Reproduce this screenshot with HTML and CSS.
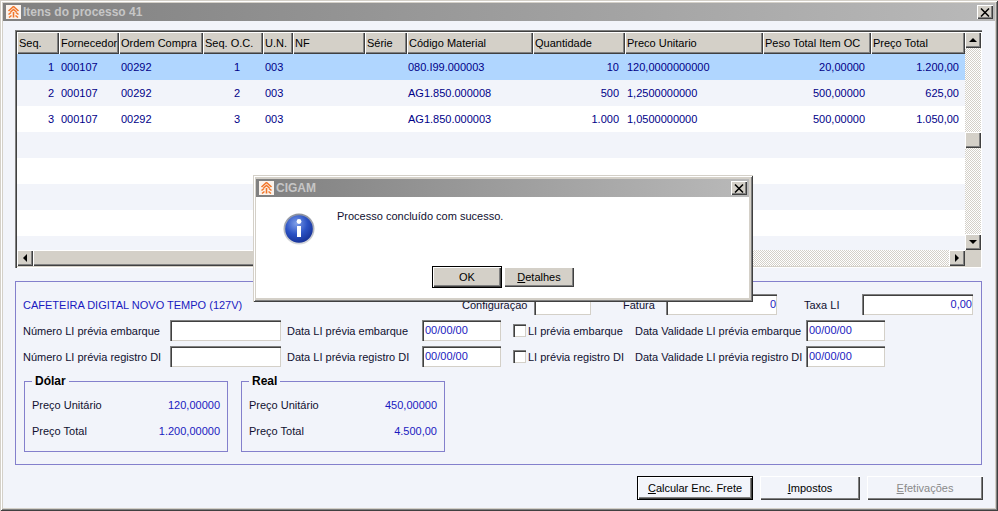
FILE: index.html
```html
<!DOCTYPE html>
<html lang="pt">
<head>
<meta charset="utf-8">
<title>Itens do processo 41</title>
<link rel="stylesheet" href="styles.css">
</head>
<body>
<div class="window main-window">
  <div class="titlebar">
    <svg class="app-icon" viewBox="0 0 15 14"><rect width="15" height="14" fill="#fbf3ec"/><path d="M7.500 1.500 2.500 6M7.500 1.500 12.500 6M4.500 7 7.500 4.500 10.500 7M2.500 9.500 5 7.500M12.500 9.500 10 7.500M3 12.500 5.500 10.500M12 12.500 9.500 10.500M7.500 7v5.500" stroke="#f2762a" stroke-width="1.600" fill="none"/></svg>
    <span class="title-text">Itens do processo 41</span>
    <button class="close-btn" type="button"><svg viewBox="0 0 10 9"><path d="M1 0.5 9 8.500M9 0.5 1 8.500" stroke="#000" stroke-width="1.500"/></svg></button>
  </div>
  <div class="client">
    <div class="grid">
      <div class="grid-top">
        <div class="grid-view">
          <table class="data-table">
            <colgroup>
              <col class="c42"><col class="c60"><col class="c84"><col class="c60"><col class="c30"><col class="c72"><col class="c42"><col class="c126"><col class="c92"><col class="c138"><col class="c108"><col class="c94">
            </colgroup>
            <thead>
              <tr><th>Seq.</th><th>Fornecedor</th><th>Ordem Compra</th><th>Seq. O.C.</th><th>U.N.</th><th>NF</th><th>Série</th><th>Código Material</th><th>Quantidade</th><th>Preco Unitario</th><th>Peso Total Item OC</th><th>Preço Total</th></tr>
            </thead>
            <tbody>
              <tr class="selected"><td class="num-seq">1</td><td>000107</td><td>00292</td><td class="num-oc">1</td><td>003</td><td></td><td></td><td class="code">080.I99.000003</td><td class="num">10</td><td>120,0000000000</td><td class="num">20,00000</td><td class="num">1.200,00</td></tr>
              <tr class="alt"><td class="num-seq">2</td><td>000107</td><td>00292</td><td class="num-oc">2</td><td>003</td><td></td><td></td><td class="code">AG1.850.000008</td><td class="num">500</td><td>1,2500000000</td><td class="num">500,00000</td><td class="num">625,00</td></tr>
              <tr><td class="num-seq">3</td><td>000107</td><td>00292</td><td class="num-oc">3</td><td>003</td><td></td><td></td><td class="code">AG1.850.000003</td><td class="num">1.000</td><td>1,0500000000</td><td class="num">500,00000</td><td class="num">1.050,00</td></tr>
              <tr class="alt"><td colspan="12"></td></tr>
              <tr><td colspan="12"></td></tr>
              <tr class="alt"><td colspan="12"></td></tr>
              <tr><td colspan="12"></td></tr>
              <tr class="alt"><td colspan="12"></td></tr>
            </tbody>
          </table>
        </div>
        <div class="vscroll">
          <div class="sb-btn"><i class="arrow up"></i></div>
          <div class="track v-track-a"></div>
          <div class="sb-thumb v-thumb"></div>
          <div class="track v-track-b"></div>
          <div class="sb-btn"><i class="arrow down"></i></div>
        </div>
      </div>
      <div class="hscroll">
        <div class="sb-btn"><i class="arrow left"></i></div>
        <div class="sb-thumb h-thumb"></div>
        <div class="track h-track"></div>
        <div class="sb-btn"><i class="arrow right"></i></div>
        <div class="corner"></div>
      </div>
    </div>

    <div class="panel">
      <div class="form-row">
        <span class="product">CAFETEIRA DIGITAL NOVO TEMPO (127V)</span>
        <label class="l-config">Configuração</label><span class="input w57"></span>
        <label class="l-fatura">Fatura</label><span class="input w111 value">0</span>
        <label class="l-taxa">Taxa LI</label><span class="input w111 value">0,00</span>
      </div>
      <div class="form-row">
        <label class="l-num">Número LI prévia embarque</label><span class="input w111"></span>
        <label class="l-data">Data LI prévia embarque</label><span class="input w79 date">00/00/00</span>
        <span class="check"></span><label class="l-check">LI prévia embarque</label>
        <label class="l-valid">Data Validade LI prévia embarque</label><span class="input w79 date">00/00/00</span>
      </div>
      <div class="form-row">
        <label class="l-num">Número LI prévia registro DI</label><span class="input w111"></span>
        <label class="l-data">Data LI prévia registro DI</label><span class="input w79 date">00/00/00</span>
        <span class="check"></span><label class="l-check">LI prévia registro DI</label>
        <label class="l-valid">Data Validade LI prévia registro DI</label><span class="input w79 date">00/00/00</span>
      </div>
      <div class="groups">
        <div class="group">
          <span class="legend">Dólar</span>
          <div class="group-row"><span>Preço Unitário</span><span class="amount">120,00000</span></div>
          <div class="group-row"><span>Preço Total</span><span class="amount">1.200,00000</span></div>
        </div>
        <div class="group">
          <span class="legend">Real</span>
          <div class="group-row"><span>Preço Unitário</span><span class="amount">450,00000</span></div>
          <div class="group-row"><span>Preço Total</span><span class="amount">4.500,00</span></div>
        </div>
      </div>
    </div>

    <div class="actions">
      <button class="action default" type="button"><u>C</u>alcular Enc. Frete</button>
      <button class="action w100" type="button"><u>I</u>mpostos</button>
      <button class="action disabled" type="button"><u>E</u>fetivações</button>
    </div>
  </div>
</div>

<div class="window dialog">
  <div class="titlebar">
    <svg class="app-icon" viewBox="0 0 15 14"><rect width="15" height="14" fill="#fbf3ec"/><path d="M7.500 1.500 2.500 6M7.500 1.500 12.500 6M4.500 7 7.500 4.500 10.500 7M2.500 9.500 5 7.500M12.500 9.500 10 7.500M3 12.500 5.500 10.500M12 12.500 9.500 10.500M7.500 7v5.500" stroke="#f2762a" stroke-width="1.600" fill="none"/></svg>
    <span class="title-text">CIGAM</span>
    <button class="close-btn" type="button"><svg viewBox="0 0 10 9"><path d="M1 0.5 9 8.500M9 0.5 1 8.500" stroke="#000" stroke-width="1.500"/></svg></button>
  </div>
  <div class="dialog-body">
    <div class="dialog-msg">
      <svg class="info-icon" viewBox="0 0 32 32">
        <defs>
          <radialGradient id="blue" cx="0.4" cy="0.3" r="0.8"><stop offset="0" stop-color="#7f9fe8"/><stop offset="0.5" stop-color="#2b52c4"/><stop offset="1" stop-color="#122a8c"/></radialGradient>
          <linearGradient id="ring" x1="0" y1="0" x2="0" y2="1"><stop offset="0" stop-color="#8a8f9c"/><stop offset="1" stop-color="#d8dade"/></linearGradient>
        </defs>
        <circle cx="16" cy="16" r="15.500" fill="url(#ring)"/>
        <circle cx="16" cy="16" r="13.800" fill="url(#blue)"/>
        <circle cx="16" cy="8.500" r="2.400" fill="#fff"/>
        <rect x="14" y="13" width="4" height="11" fill="#fff"/>
      </svg>
      <p class="msg-text">Processo concluído com sucesso.</p>
    </div>
    <div class="dialog-actions">
      <button class="dlg-btn default" type="button">OK</button>
      <button class="dlg-btn small" type="button"><u>D</u>etalhes</button>
    </div>
  </div>
</div>
</body>
</html>
```
FILE: styles.css
```css
* { box-sizing: border-box; }
html, body { margin: 0; padding: 0; }
body {
  width: 998px;
  height: 511px;
  overflow: hidden;
  position: relative;
  font: 11px "Liberation Sans", sans-serif;
  color: #101030;
  background: #d4d0c8;
}
.window {
  position: absolute;
  display: flex;
  flex-direction: column;
  padding: 3px;
  background: #d4d0c8;
  box-shadow: inset 1px 1px 0 #d4d0c8, inset -1px -1px 0 #404040, inset 2px 2px 0 #fff, inset -2px -2px 0 #808080;
}
.main-window { left: 0; top: 0; width: 998px; height: 511px; }
.dialog { left: 253px; top: 175px; width: 500px; height: 127px; padding: 4px 4px 4px 3px; z-index: 2; }

.titlebar {
  height: 18px;
  flex: none;
  display: flex;
  align-items: center;
  padding: 0 2px 0 3px;
  background: linear-gradient(90deg, #808080, #b9b9b9);
}
.app-icon { width: 15px; height: 14px; flex: none; }
.title-text {
  margin-left: 2px;
  font: bold 12px "Liberation Sans", sans-serif;
  color: #c6c6c6;
  white-space: nowrap;
  flex: 1;
}
.close-btn {
  width: 16px;
  height: 14px;
  padding: 0 2px;
  border: 0;
  display: flex;
  align-items: center;
  justify-content: center;
  background: #d4d0c8;
  box-shadow: inset 1px 1px 0 #fff, inset -1px -1px 0 #404040, inset -2px -2px 0 #808080;
}
.close-btn svg { width: 10px; height: 9px; }

.client {
  flex: 1;
  background: #f2f4fa;
  padding: 9px 13px 0 12px;
  display: flex;
  flex-direction: column;
}

/* data grid */
.grid {
  width: 967px;
  height: 238px;
  flex: none;
  padding: 2px 1px 1px 2px;
  background: #fff;
  box-shadow: inset 1px 1px 0 #808080, inset 2px 2px 0 #404040, inset -1px -1px 0 #fff, inset -2px -2px 0 #d4d0c8;
}
.grid-top { display: flex; height: 218px; }
.grid-view { width: 948px; height: 218px; overflow: hidden; background: #f2f4fa; }
.data-table { width: 948px; table-layout: fixed; border-collapse: collapse; border-spacing: 0; }
.c30 { width: 30px; } .c42 { width: 42px; } .c60 { width: 60px; } .c72 { width: 72px; }
.c84 { width: 84px; } .c92 { width: 92px; } .c94 { width: 94px; } .c108 { width: 108px; }
.c126 { width: 126px; } .c138 { width: 138px; }
th {
  height: 22px;
  padding: 0 0 1px 2px;
  font-weight: normal;
  font-size: 11px;
  text-align: left;
  color: #000;
  white-space: nowrap;
  overflow: hidden;
  background: #d4d0c8;
  box-shadow: inset 1px 1px 0 #fff, inset -1px -1px 0 #404040, inset -2px -2px 0 #808080;
}
td {
  height: 26px;
  padding: 0 0 1px 2px;
  color: #000088;
  background: #fff;
  white-space: nowrap;
}
.alt td { background: #f2f4fa; }
.selected td { background: #b0d6ff; }
td.num { text-align: right; padding-right: 6px; }
td.num-seq { text-align: right; padding-right: 5px; }
td.num-oc { text-align: right; padding-right: 23px; }
td.code { padding-left: 1px; }

/* scrollbars */
.vscroll { width: 16px; display: flex; flex-direction: column; }
.hscroll { display: flex; height: 16px; }
.sb-btn, .sb-thumb {
  flex: none;
  background: #d4d0c8;
  box-shadow: inset 1px 1px 0 #fff, inset -1px -1px 0 #404040, inset -2px -2px 0 #808080;
}
.sb-btn { width: 16px; height: 16px; display: flex; align-items: center; justify-content: center; }
.track { background: repeating-conic-gradient(#d4d0c8 0 25%, #fff 0 50%) 0 0 / 2px 2px; }
.v-track-a { height: 84px; }
.v-thumb { height: 16px; }
.v-track-b { flex: 1; }
.h-thumb { width: 300px; }
.h-track { flex: 1; }
.corner { width: 16px; flex: none; background: #d4d0c8; }
.arrow { width: 0; height: 0; border: 4px solid transparent; display: block; }
.arrow.up { border-top: 0; border-bottom-color: #000; }
.arrow.down { border-bottom: 0; border-top-color: #000; }
.arrow.left { border-left: 0; border-right-color: #000; }
.arrow.right { border-right: 0; border-left-color: #000; }

/* form panel */
.panel {
  width: 967px;
  height: 184px;
  flex: none;
  margin-top: 13px;
  padding: 12px 7px 0;
  border: 1px solid #8480cc;
  display: flex;
  flex-direction: column;
  gap: 5px;
}
.form-row { display: flex; align-items: center; height: 21px; white-space: nowrap; }
.form-row label { display: block; flex: none; }
.product { width: 439px; color: #1a1ac0; flex: none; }
.l-config { width: 72px; }
.l-fatura { width: 43px; margin-left: 32px; }
.l-taxa { width: 58px; margin-left: 27px; }
.l-num { width: 147px; }
.l-data { width: 135px; margin-left: 6px; }
.l-check { width: 107px; margin-left: 2px; }
.l-valid { width: 171px; }
.input {
  flex: none;
  height: 100%;
  display: block;
  background: #fff;
  line-height: 21px;
  color: #1a1ac0;
  padding: 0 1px 0 3px;
  box-shadow: inset 1px 1px 0 #808080, inset 2px 2px 0 #404040, inset -1px -1px 0 #d4d0c8;
}
.w57 { width: 57px; }
.w79 { width: 79px; }
.w111 { width: 111px; }
.value { text-align: right; }
.date { color: #1a1ac0; }
.check {
  flex: none;
  width: 13px;
  height: 13px;
  margin-left: 12px;
  background: #fff;
  box-shadow: inset 1px 1px 0 #808080, inset 2px 2px 0 #404040, inset -1px -1px 0 #d4d0c8;
}
.groups { display: flex; gap: 13px; margin: 9px 0 0 1px; }
.group {
  position: relative;
  width: 204px;
  height: 71px;
  padding: 10px 7px 0;
  border: 1px solid #8480cc;
}
.legend {
  position: absolute;
  left: 7px;
  top: -8px;
  padding: 0 3px;
  font-weight: bold;
  font-size: 12px;
  color: #000;
  background: #f2f4fa;
}
.group-row { display: flex; justify-content: space-between; align-items: center; height: 26px; }
.amount { color: #1a1ac0; }

/* buttons */
.actions { display: flex; justify-content: flex-end; gap: 7px; margin: 11px -1px 0 0; }
.action {
  width: 116px;
  height: 24px;
  padding: 0;
  border: 0;
  font: 11px "Liberation Sans", sans-serif;
  color: #000;
  background: #f2f4fa;
  box-shadow: inset 1px 1px 0 #fff, inset -1px -1px 0 #404040, inset -2px -2px 0 #808080;
}
.action.w100 { width: 100px; }
.action.default { box-shadow: inset 0 0 0 1px #000, inset 2px 2px 0 #fff, inset -2px -2px 0 #404040, inset -3px -3px 0 #808080; }
.action.disabled { color: #8a8a8a; }

/* dialog */
.dialog-body { flex: 1; background: #fff; display: flex; flex-direction: column; }
.dialog-msg { display: flex; height: 69px; padding: 11px 0 0 27px; flex: none; }
.info-icon { width: 32px; height: 32px; flex: none; margin-top: 5px; }
.msg-text { margin: 0 0 0 22px; line-height: 17px; color: #101030; }
.dialog-actions { display: flex; align-items: center; gap: 2px; padding-left: 176px; }
.dlg-btn {
  width: 70px;
  height: 22px;
  padding: 0;
  border: 0;
  font: 11px "Liberation Sans", sans-serif;
  color: #000;
  background: #d4d0c8;
  box-shadow: inset 1px 1px 0 #fff, inset -1px -1px 0 #404040, inset -2px -2px 0 #808080;
}
.dlg-btn.small { height: 20px; }
.dlg-btn.default { box-shadow: inset 0 0 0 1px #000, inset 2px 2px 0 #fff, inset -2px -2px 0 #404040, inset -3px -3px 0 #808080; }
```
